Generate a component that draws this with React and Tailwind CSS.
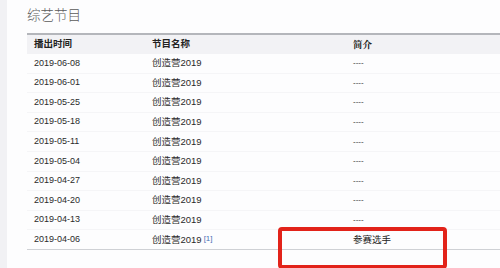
import React from "react";

const rows = [
  ["2019-06-08", "----"],
  ["2019-06-01", "----"],
  ["2019-05-25", "----"],
  ["2019-05-18", "----"],
  ["2019-05-11", "----"],
  ["2019-05-04", "----"],
  ["2019-04-27", "----"],
  ["2019-04-20", "----"],
  ["2019-04-13", "----"],
  ["2019-04-06", "参赛选手", true],
];

const cjk = { fontFamily: '"Liberation Sans", "Noto Sans CJK SC", sans-serif' };

export default function App() {
  return (
    <div className="relative w-[500px] h-[268px] overflow-hidden bg-[#fdfdfe] flex" style={cjk}>
      <div className="w-[7px] h-full bg-[#f1f1f4] shrink-0" />
      <div className="flex-1 pl-[20px] flex flex-col">
        <div className="h-[33px] pt-[7px] text-[13.5px] leading-[18px] text-[#5a5a5a] font-light">
          综艺节目
        </div>
        <div className="w-[600px] border-t-2 border-[#b4b6bb]">
          <div className="grid grid-cols-[118px_201px_1fr] h-[19px] bg-[#f2f2f5] items-center text-[9.5px] font-bold text-[#222]">
            <div className="pl-[7px]">播出时间</div>
            <div className="pl-[7px]">节目名称</div>
            <div className="pl-[7px]" style={{ fontFamily: '"Noto Serif CJK SC", "Noto Sans CJK SC", serif' }}>简介</div>
          </div>
          {rows.map(([d, note, ref], i) => (
            <div
              key={d}
              className={
                "grid grid-cols-[118px_201px_1fr] h-[19.6px] items-center text-[9px] text-[#2a2a2a] " +
                (i === rows.length - 1 ? "border-b border-[#cfd1d5]" : "border-b border-[#f5f5f7]")
              }
            >
              <div className="pl-[7px]">{d}</div>
              <div className="pl-[7px] text-[9.5px]">
                创造营2019
                {ref && (
                  <sup className="ml-[2px] text-[8px] text-[#4a6fb5] relative top-[-2px]">[1]</sup>
                )}
              </div>
              <div className={"pl-[7px] " + (ref ? "text-[9.5px] text-[#222]" : "text-[8px] text-[#333]")}>{note}</div>
            </div>
          ))}
        </div>
      </div>
      <div className="absolute left-[278px] top-[227px] w-[169px] h-[42px] border-[4.5px] border-[#e2231a] rounded-[4px]" />
    </div>
  );
}
